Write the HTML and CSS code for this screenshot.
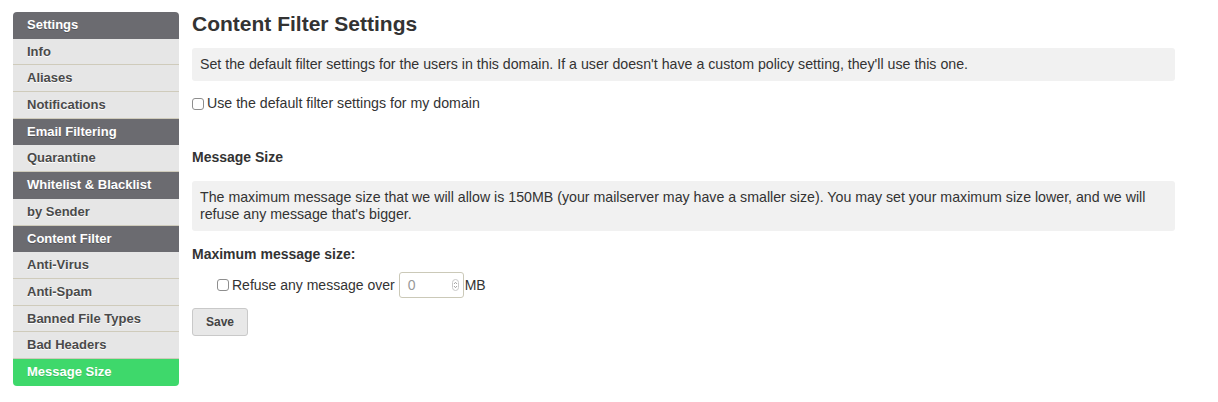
FILE: index.html
```html
<!DOCTYPE html>
<html>
<head>
<meta charset="utf-8">
<link rel="stylesheet" href="styles.css">
</head>
<body>
<div class="page">
  <nav class="sidebar">
    <div class="nav-head first">Settings</div>
    <div class="nav-item">Info</div>
    <div class="nav-item">Aliases</div>
    <div class="nav-item">Notifications</div>
    <div class="nav-head">Email Filtering</div>
    <div class="nav-item">Quarantine</div>
    <div class="nav-head">Whitelist &amp; Blacklist</div>
    <div class="nav-item">by Sender</div>
    <div class="nav-head">Content Filter</div>
    <div class="nav-item">Anti-Virus</div>
    <div class="nav-item">Anti-Spam</div>
    <div class="nav-item">Banned File Types</div>
    <div class="nav-item">Bad Headers</div>
    <div class="nav-item active">Message Size</div>
  </nav>
  <main class="main">
    <h1 class="title">Content Filter Settings</h1>
    <div class="info">Set the default filter settings for the users in this domain. If a user doesn't have a custom policy setting, they'll use this one.</div>
    <label class="check-line"><input type="checkbox" class="cb">Use the default filter settings for my domain</label>
    <h2 class="section">Message Size</h2>
    <div class="info two">The maximum message size that we will allow is 150MB (your mailserver may have a smaller size). You may set your maximum size lower, and we will refuse any message that's bigger.</div>
    <h3 class="label">Maximum message size:</h3>
    <div class="size-row">
      <input type="checkbox" class="cb">
      <span>Refuse any message over</span>
      <span class="num"><span class="num-val">0</span><svg class="spin" width="7" height="12" viewBox="0 0 7 12"><rect x="0.5" y="0.5" width="6" height="11" rx="3" fill="none" stroke="#c8c8c8"/><path d="M2 5 L3.5 3.3 L5 5" fill="none" stroke="#999" stroke-width="0.9"/><path d="M2 7 L3.5 8.7 L5 7" fill="none" stroke="#999" stroke-width="0.9"/></svg></span>
      <span>MB</span>
    </div>
    <button class="save">Save</button>
  </main>
</div>
</body>
</html>
```

FILE: styles.css
```css
* { box-sizing: border-box; }
html, body { margin: 0; padding: 0; background: #fff; }
body {
  font-family: "Liberation Sans", Arial, sans-serif;
  font-size: 13px;
  color: #333;
}
.page {
  display: flex;
  gap: 13px;
  padding: 12px 0 0 13px;
}
.sidebar {
  width: 166px;
  flex: none;
  border-radius: 4px;
  overflow: hidden;
  align-self: flex-start;
}
.nav-head, .nav-item {
  font-weight: bold;
  font-size: 13px;
  line-height: 16.7px;
  padding: 5px 14px;
  height: 26.7px;
}
.nav-head {
  background: #6b6b70;
  color: #fff;
  text-shadow: 0 1px 0 rgba(0,0,0,0.25);
}
.nav-item {
  background: #e6e6e6;
  color: #4a4a4a;
  border-bottom: 1px solid #cfcbbb;
  text-shadow: 0 1px 0 #fff;
}
.nav-item.active {
  background: #3ed86b;
  color: #fff;
  border-bottom: none;
  text-shadow: 0 1px 0 rgba(0,0,0,0.15);
}
.main {
  width: 983px;
  font-size: 14.2px;
}
.title {
  font-size: 21px;
  font-weight: bold;
  color: #333;
  margin: 0;
  line-height: 24px;
  padding-top: 0;
}
.info {
  background: #f1f1f1;
  border-radius: 3px;
  padding: 8px 8px;
  line-height: 17px;
  margin-top: 12px;
  color: #333;
}
.info.two { margin-top: 15px; }
.check-line {
  display: flex;
  align-items: center;
  margin-top: 14px;
  line-height: 17px;
}
.cb {
  width: 12px;
  height: 12px;
  margin: 0 3px 0 0;
  appearance: none;
  -webkit-appearance: none;
  border: 1px solid #8e8e8e;
  border-radius: 3px;
  background: #fff;
  flex: none;
}
.section {
  font-size: 14px;
  font-weight: bold;
  margin: 37px 0 0;
  line-height: 17px;
}
.label {
  font-size: 14px;
  font-weight: bold;
  margin: 15px 0 0;
  line-height: 17px;
}
.size-row {
  display: flex;
  align-items: center;
  margin: 9px 0 0 25px;
  line-height: 17px;
  font-size: 14px;
}
.num {
  display: inline-flex;
  align-items: center;
  justify-content: space-between;
  width: 65px;
  height: 26px;
  border: 1px solid #cbc9b8;
  border-radius: 3px;
  padding: 0 4px 0 8px;
  margin: 0 1px 0 4px;
  color: #999;
}
.spin { display: block; }
.save {
  display: block;
  margin-top: 10px;
  width: 56px;
  height: 28px;
  font-family: "Liberation Sans", Arial, sans-serif;
  font-size: 12px;
  font-weight: bold;
  color: #444;
  background: #e8e8e8;
  border: 1px solid #c9c9c9;
  border-radius: 3px;
  padding: 0;
}
```
